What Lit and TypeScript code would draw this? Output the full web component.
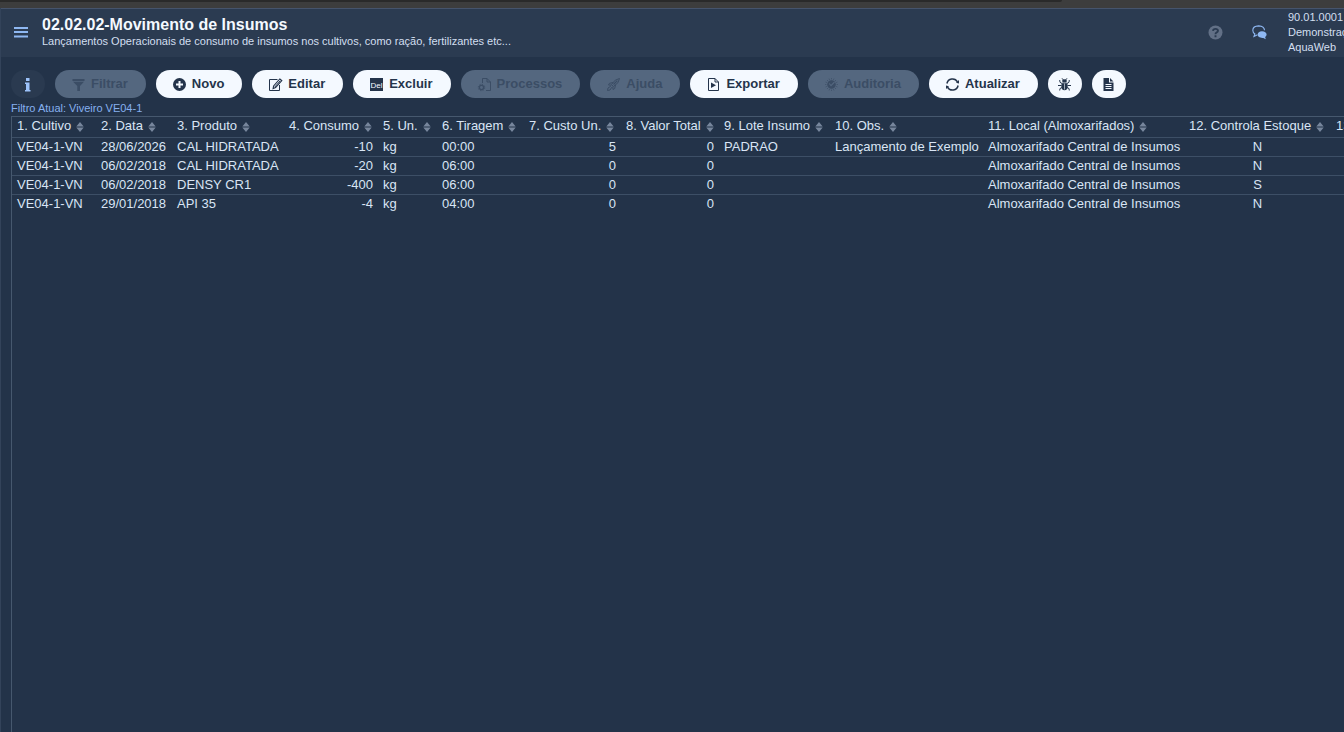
import { LitElement, html, css, svg } from "lit";
import { customElement } from "lit/decorators.js";
import { classMap } from "lit/directives/class-map.js";

type Align = "left" | "right" | "center";

interface Column {
  label: string;
  width: number;
  align: Align;
}

const COLUMNS: Column[] = [
  { label: "1. Cultivo", width: 84, align: "left" },
  { label: "2. Data", width: 76, align: "left" },
  { label: "3. Produto", width: 112, align: "left" },
  { label: "4. Consumo", width: 94, align: "right" },
  { label: "5. Un.", width: 59, align: "left" },
  { label: "6. Tiragem", width: 87, align: "left" },
  { label: "7. Custo Un.", width: 97, align: "right" },
  { label: "8. Valor Total", width: 98, align: "right" },
  { label: "9. Lote Insumo", width: 111, align: "left" },
  { label: "10. Obs.", width: 153, align: "left" },
  { label: "11. Local (Almoxarifados)", width: 201, align: "left" },
  { label: "12. Controla Estoque", width: 147, align: "center" },
  { label: "13. Usuário", width: 110, align: "left" },
];

const TABLE_WIDTH = COLUMNS.reduce((sum, c) => sum + c.width, 0);

const LOCAL = "Almoxarifado Central de Insumos";

const ROWS: string[][] = [
  ["VE04-1-VN", "28/06/2026", "CAL HIDRATADA", "-10", "kg", "00:00", "5", "0", "PADRAO", "Lançamento de Exemplo", LOCAL, "N", ""],
  ["VE04-1-VN", "06/02/2018", "CAL HIDRATADA", "-20", "kg", "06:00", "0", "0", "", "", LOCAL, "N", ""],
  ["VE04-1-VN", "06/02/2018", "DENSY CR1", "-400", "kg", "06:00", "0", "0", "", "", LOCAL, "S", ""],
  ["VE04-1-VN", "29/01/2018", "API 35", "-4", "kg", "04:00", "0", "0", "", "", LOCAL, "N", ""],
];

const DIAL_MARKS = Array.from({ length: 16 }, (_, i) => i * 22.5);

const ICONS = {
  info: svg`<path fill="currentColor" d="M4 0h3.500v3H4zM3 4.500h4.500V12H8.500v1.500H3V12h1V6H3z"/>`,
  filter: svg`<path fill="currentColor" d="M.5 1h12v2H.5zM1 3.700h11L8 8v5H5.300V8z"/>`,
  plus: svg`<path fill="currentColor" fill-rule="evenodd" d="M6.500 0a6.500 6.500 0 1 1 0 13a6.500 6.500 0 0 1 0-13zM5.500 3v2.500H3v2h2.500V10h2V7.500H10v-2H7.500V3z"/>`,
  edit: svg`<path fill="none" stroke="currentColor" d="M8.500 1.500h-8v11h10V7"/>
    <path fill="none" stroke="currentColor" stroke-width="1.100" d="M10.800 1l2 1.600-6.200 7-2.500 1 .5-2.700z"/>
    <path stroke="currentColor" stroke-width="1" d="M11.200 2.800L5.800 9"/>`,
  del: svg`<rect width="13" height="13" fill="currentColor"/>
    <text x="6.500" y="10" text-anchor="middle" font-size="8" font-weight="normal" fill="#f4f9ff">Del</text>`,
  process: svg`<path fill="none" stroke="currentColor" d="M4.500 5V.500H9l3.500 3.500v8.500H8M9 .5V4h3.500"/>
    <circle cx="3.500" cy="9.500" r="2.100" fill="none" stroke="currentColor" stroke-width="1.300"/>
    <circle cx="3.500" cy="9.500" r="3.200" fill="none" stroke="currentColor" stroke-width="1" stroke-dasharray="1.200 1.300"/>`,
  rocket: svg`<path fill="none" stroke="currentColor" d="M12.500.5Q8 .8 4.500 6.500l2 2Q12.300 5 12.500.5zM6 4.500l-3.500.8L1.500 7l3 .2M8.500 7l-.8 3.500L6 11.500l-.2-3M3.800 8.200L1 10l-.5 2.500L3 12l1.800-2.800"/>
    <path stroke="currentColor" stroke-width="1.200" d="M10.300 2.700L6.500 6.500"/>`,
  export: svg`<path fill="none" stroke="currentColor" d="M1.500.5H8l3.500 3.500v8.500h-10zM8 .5V4h3.500"/>
    <path fill="currentColor" d="M4 4.500l5 2.800-5 2.800z"/>`,
  dial: svg`<circle cx="6.500" cy="6.500" r="4.300" fill="currentColor"/>
    ${DIAL_MARKS.map(
      (a) => svg`<path stroke="currentColor" stroke-width=".8" d="M6.500 .2v1.100" transform=${`rotate(${a} 6.500 6.500)`}/>`
    )}
    <path fill="none" stroke="#54677f" stroke-width="1.100" d="M4.300 5.500l1.700 2.200L9.500 4"/>`,
  refresh: svg`<path fill="none" stroke="currentColor" stroke-width="1.500" d="M.9 5.500A5.700 5.700 0 0 1 11.500 3.900M12.100 7.500A5.700 5.700 0 0 1 1.500 9.100"/>
    <path fill="currentColor" d="M13 2v3.500L10 4.700zM0 11V7.500l3 .8z"/>`,
  bug: svg`<ellipse cx="6.500" cy="8" rx="3.200" ry="4.300" fill="currentColor"/>
    <ellipse cx="6.500" cy="3" rx="2.400" ry="1.700" fill="currentColor"/>
    <path fill="none" stroke="currentColor" d="M5.500 2L4 .3M7.500 2L9 .3M4 5.500L2 4.300 1.700 2M9 5.500l2-1.200.3-2.300M3.500 7.500H0M9.500 7.500H13M4 9.500l-2 1-.3 2M9 9.500l2 1 .3 2"/>
    <path stroke="#f4f9ff" stroke-width=".6" d="M6.500 5.500v6M4 4.800h5"/>`,
  file: svg`<path fill="currentColor" fill-rule="evenodd" d="M1.500 0H7v4.500h4.500V13h-10zM8 0l3.500 3.500H8zM3.500 6v1h6V6zM3.500 8v1h6V8zM3.500 10v1h6v-1z"/>`,
};

interface Action {
  label: string;
  text: string;
  icon: keyof typeof ICONS;
  disabled?: boolean;
  quiet?: boolean;
}

const ACTIONS: Action[] = [
  { label: "Informações", text: "", icon: "info", quiet: true },
  { label: "Filtrar", text: "Filtrar", icon: "filter", disabled: true },
  { label: "Novo", text: "Novo", icon: "plus" },
  { label: "Editar", text: "Editar", icon: "edit" },
  { label: "Excluir", text: "Excluir", icon: "del" },
  { label: "Processos", text: "Processos", icon: "process", disabled: true },
  { label: "Ajuda", text: "Ajuda", icon: "rocket", disabled: true },
  { label: "Exportar", text: "Exportar", icon: "export" },
  { label: "Auditoria", text: "Auditoria", icon: "dial", disabled: true },
  { label: "Atualizar", text: "Atualizar", icon: "refresh" },
  { label: "Depurar", text: "", icon: "bug" },
  { label: "Documento", text: "", icon: "file" },
];

@customElement("app-header")
class AppHeader extends LitElement {
  static styles = css`
    :host {
      display: block;
      overflow: hidden;
      border-top: 1px solid #46546c;
      background: #2b3b51;
    }
    .bar {
      display: flex;
      align-items: center;
      padding: 0 0 2px 12px;
      min-height: 46px;
    }
    .icon {
      display: flex;
      flex: none;
      padding: 0;
      border: 0;
      background: none;
      color: #8fb8f2;
    }
    .titles {
      flex: 1;
      min-width: 0;
      margin-left: 13px;
      white-space: nowrap;
    }
    h1 {
      margin: 0;
      font-size: 16px;
      line-height: 18px;
      color: #f4f9ff;
    }
    p {
      margin: 0;
      font-size: 11px;
      line-height: 15px;
      color: #d3dff0;
    }
    .tools {
      display: flex;
      flex: none;
      align-items: center;
      gap: 29px;
    }
    .help {
      color: #627086;
    }
    .account {
      width: 56px;
      margin-left: -8px;
      font-size: 11px;
      line-height: 15px;
      white-space: nowrap;
      color: #d3dff0;
    }
  `;

  render() {
    return html`
      <header class="bar">
        <button class="icon" aria-label="Menu">
          <svg width="16" height="16" viewBox="0 0 16 16">
            <path fill="currentColor" d="M1 3h14v2H1zM1 7h14v2H1zM1 11.500h14v2H1z" />
          </svg>
        </button>
        <div class="titles">
          <h1>02.02.02-Movimento de Insumos</h1>
          <p>Lançamentos Operacionais de consumo de insumos nos cultivos, como ração, fertilizantes etc...</p>
        </div>
        <div class="tools">
          <button class="icon help" aria-label="Ajuda">
            <svg width="15" height="15" viewBox="0 0 15 15">
              <circle cx="7.500" cy="7.500" r="7" fill="currentColor" />
              <path fill="none" stroke="#2b3b51" stroke-width="1.900" d="M5 5.800Q5.200 3.900 7.500 3.900T10 5.800Q10 6.900 8.500 7.500 7.500 8 7.500 9.200M7.500 10.300v1.900" />
            </svg>
          </button>
          <button class="icon" aria-label="Mensagens">
            <svg width="15" height="15" viewBox="0 0 15 15">
              <path fill="none" stroke="currentColor" stroke-width="1.100" d="M5.500 9.700L2 11.500l.9-2.600Q.8 7.700.8 5.200.9 1.200 6.700.9 12.300 1.200 12.500 5.300" />
              <path fill="currentColor" d="M10 6.200c2.700 0 4.600 1.400 4.600 3.400 0 1-.6 1.800-1.500 2.400l.7 2.200-2.500-1.300c-3.300.3-5.600-1-5.600-3.300 0-1.800 1.700-3.400 4.300-3.400z" />
            </svg>
          </button>
          <div class="account">90.01.0001<br />Demonstração<br />AquaWeb</div>
        </div>
      </header>
    `;
  }
}

@customElement("action-bar")
class ActionBar extends LitElement {
  static styles = css`
    :host {
      display: flex;
      gap: 10px;
    }
    button {
      display: flex;
      flex: none;
      align-items: center;
      gap: 6px;
      height: 28px;
      padding: 0 18px 0 17px;
      border: 0;
      border-radius: 14px;
      background: #f4f9ff;
      color: #24344b;
      font: bold 13px/28px "Liberation Sans", Arial, sans-serif;
      cursor: pointer;
    }
    svg {
      display: block;
      overflow: visible;
    }
    .round {
      justify-content: center;
      width: 34px;
      padding: 0;
    }
    .quiet {
      background: #2a3a50;
      color: #9cc2fa;
    }
    .off {
      background: #54677f;
      color: #3b4d65;
      cursor: default;
    }
  `;

  render() {
    return ACTIONS.map(
      (a) => html`<button
        class=${classMap({ round: !a.text, quiet: !!a.quiet, off: !!a.disabled })}
        aria-label=${a.label}
        ?disabled=${a.disabled}
      ><svg width="13" height="13" viewBox="0 0 13 13" aria-hidden="true">${ICONS[a.icon]}</svg>${a.text}</button>`
    );
  }
}

@customElement("data-grid")
class DataGrid extends LitElement {
  static styles = css`
    :host {
      display: block;
      overflow: hidden;
      border: 1px solid #46586e;
      border-width: 1px 0 0 1px;
    }
    table {
      table-layout: fixed;
      border-collapse: separate;
      border-spacing: 0;
      font-size: 13px;
      color: #d9e5f5;
    }
    th,
    td {
      box-sizing: border-box;
      padding: 0 5px;
      white-space: nowrap;
      text-align: left;
      font-weight: normal;
      line-height: 18px;
      border-bottom: 1px solid #3d4f66;
    }
    th {
      height: 21px;
      padding-bottom: 2px;
    }
    td {
      height: 19px;
    }
    tr:last-child td {
      border-bottom-color: transparent;
    }
    thead tr:last-child th {
      border-bottom-color: #3d4f66;
    }
    td.right {
      text-align: right;
    }
    td.center {
      text-align: center;
    }
    .sort {
      display: inline-block;
      margin-left: 5px;
      vertical-align: -2px;
      fill: #77869c;
    }
  `;

  render() {
    return html`
      <table style="width:${TABLE_WIDTH}px">
        <colgroup>
          ${COLUMNS.map((c) => html`<col style="width:${c.width}px" />`)}
        </colgroup>
        <thead>
          <tr>
            ${COLUMNS.map(
              (c) => html`<th scope="col">${c.label}<svg class="sort" width="8" height="10" viewBox="0 0 8 10"><path d="M4 0l3.700 4.400H.3zM4 10L.3 5.600h7.400z" /></svg></th>`
            )}
          </tr>
        </thead>
        <tbody>
          ${ROWS.map(
            (r) => html`<tr>${r.map((v, i) => html`<td class=${COLUMNS[i].align}>${v}</td>`)}</tr>`
          )}
        </tbody>
      </table>
    `;
  }
}

@customElement("app-root")
class AppRoot extends LitElement {
  static styles = css`
    :host {
      display: flex;
      flex-direction: column;
      height: 100vh;
      overflow: hidden;
      background: #233349;
      font-family: "Liberation Sans", Arial, sans-serif;
    }
    .strip {
      flex: none;
      height: 8px;
      background: #3d3d3d;
    }
    .tab {
      width: 79%;
      height: 2px;
      border-bottom-right-radius: 2px;
      background: #2a2a2a;
    }
    .page {
      display: flex;
      flex: 1;
      flex-direction: column;
      min-height: 0;
      border-left: 1px solid #33435a;
    }
    .content {
      display: flex;
      flex: 1;
      flex-direction: column;
      min-height: 0;
      padding: 13px 0 0 10px;
    }
    .current {
      margin: 4px 0 1px;
      font-size: 11px;
      line-height: 13px;
      color: #86b1f0;
    }
    .grid {
      flex: 1;
    }
  `;

  render() {
    return html`
      <div class="strip"><div class="tab"></div></div>
      <div class="page">
        <app-header></app-header>
        <main class="content">
          <action-bar></action-bar>
          <p class="current">Filtro Atual: Viveiro VE04-1</p>
          <data-grid class="grid"></data-grid>
        </main>
      </div>
    `;
  }
}
